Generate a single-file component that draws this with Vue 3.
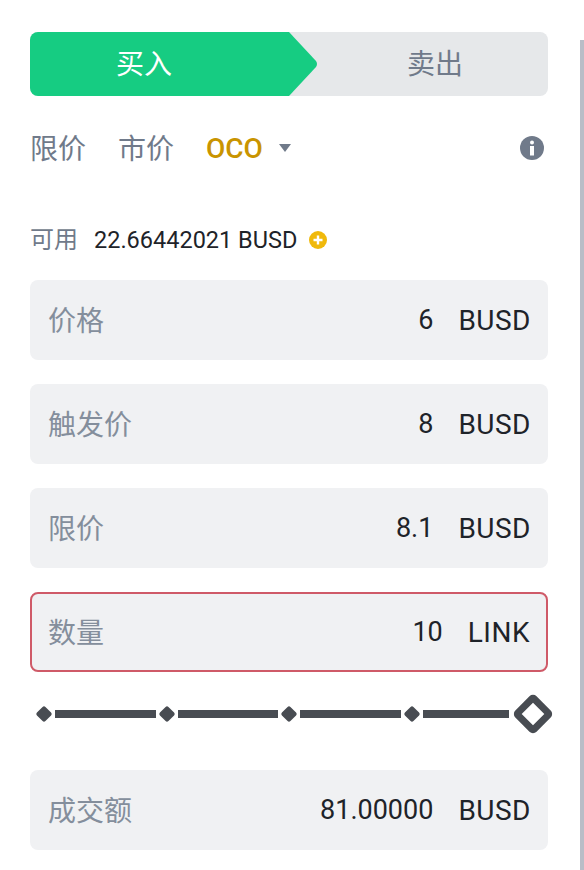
<template>
  <div class="page">
    <div class="panel">
      <div class="side-tabs">
        <div class="buy">买入</div>
        <svg class="buy-arrow" width="30" height="64" viewBox="0 0 30 64">
          <path d="M0 0H1L28 29Q30 32 28 35L1 64H0Z" fill="#16cc82" />
        </svg>
        <div class="sell">卖出</div>
      </div>

      <div class="order-types">
        <span class="type">限价</span>
        <span class="type">市价</span>
        <span class="type active">OCO</span>
        <span class="caret"></span>
        <svg class="info" width="24" height="24" viewBox="0 0 24 24">
          <circle cx="12" cy="12" r="12" fill="#707a8a" />
          <circle cx="12" cy="6.5" r="2" fill="#fff" />
          <rect x="10" y="10" width="4" height="9.5" fill="#fff" />
        </svg>
      </div>

      <div class="balance">
        <span class="balance-label">可用</span>
        <span class="balance-value">22.66442021 BUSD</span>
        <svg width="18" height="18" viewBox="0 0 18 18">
          <circle cx="9" cy="9" r="9" fill="#f0b90b" />
          <path d="M9 4.5v9M4.5 9h9" stroke="#fff" stroke-width="2.4" />
        </svg>
      </div>

      <div class="fields">
        <div v-for="f in topFields" :key="f.label" class="field" :class="{ error: f.error }">
          <span class="field-label">{{ f.label }}</span>
          <span class="field-value">{{ f.value }}</span>
          <span class="field-unit">{{ f.unit }}</span>
        </div>
      </div>

      <div class="slider">
        <template v-for="n in 4" :key="n">
          <span class="dot"></span>
          <span class="seg"></span>
        </template>
        <span class="thumb"></span>
      </div>

      <div class="field">
        <span class="field-label">成交额</span>
        <span class="field-value">81.00000</span>
        <span class="field-unit">BUSD</span>
      </div>
    </div>
    <div class="scrollbar"></div>
  </div>
</template>

<script setup>
const topFields = [
  { label: '价格', value: '6', unit: 'BUSD' },
  { label: '触发价', value: '8', unit: 'BUSD' },
  { label: '限价', value: '8.1', unit: 'BUSD' },
  { label: '数量', value: '10', unit: 'LINK', error: true }
]
</script>

<style>
html, body {
  margin: 0;
  background: #fff;
}
</style>

<style scoped>
.page {
  display: flex;
  height: 870px;
  overflow: hidden;
  font-family: Roboto, "Noto Sans CJK SC", sans-serif;
  color: #1e2329;
}

.panel {
  width: 518px;
  padding: 32px 0 0 30px;
}

.scrollbar {
  width: 4px;
  height: 830px;
  margin: 40px 0 0 32px;
  background: #b9bdc7;
}

.side-tabs {
  display: flex;
  height: 64px;
  background: #e6e8ea;
  border-radius: 8px;
  overflow: hidden;
  font-size: 28px;
  line-height: 66px;
}

.buy {
  width: 258px;
  padding-right: 30px;
  box-sizing: border-box;
  text-align: center;
  color: #fff;
  background: #16cc82;
}

.buy-arrow {
  flex: none;
}

.sell {
  flex: 1;
  padding-left: 4px;
  text-align: center;
  color: #707a8a;
}

.order-types {
  display: flex;
  align-items: center;
  height: 40px;
  margin-top: 32px;
  font-size: 28px;
  color: #707a8a;
}

.type {
  margin-right: 32px;
  margin-bottom: 2px;
}

.type.active {
  margin-right: 16px;
  margin-bottom: 0;
  font-weight: 500;
  color: #c99400;
}

.caret {
  width: 0;
  height: 0;
  border-left: 6px solid transparent;
  border-right: 6px solid transparent;
  border-top: 8px solid #707a8a;
}

.info {
  margin-left: auto;
  margin-right: 4px;
}

.balance {
  display: flex;
  align-items: center;
  height: 32px;
  margin-top: 56px;
  font-size: 23.5px;
}

.balance-label {
  margin-right: 16px;
  margin-bottom: 5px;
  font-size: 24px;
  color: #707a8a;
}

.balance-value {
  margin-right: 12px;
}

.fields {
  display: flex;
  flex-direction: column;
  gap: 24px;
  margin-top: 24px;
}

.field {
  display: flex;
  align-items: center;
  height: 80px;
  padding: 0 17px 0 18px;
  box-sizing: border-box;
  background: #f0f1f3;
  border-radius: 8px;
  font-size: 27px;
}

.field.error {
  border: 2px solid #cf5a68;
  padding: 0 16px;
}

.field-label {
  margin-right: auto;
  margin-bottom: 2px;
  font-size: 28px;
  color: #848e9c;
}

.field-unit {
  margin-left: 25px;
  font-size: 28px;
  letter-spacing: 0.5px;
}

.slider {
  display: flex;
  align-items: center;
  gap: 5px;
  height: 44px;
  margin: 20px 0 34px 8px;
}

.dot {
  flex: none;
  width: 12px;
  height: 12px;
  background: #484c52;
  border-radius: 2px;
  transform: rotate(45deg);
}

.seg {
  flex: none;
  width: 100.6px;
  height: 8px;
  background: #484c52;
}

.seg:nth-last-child(2) {
  flex: 1;
  width: auto;
  margin-right: 4px;
}

.thumb {
  flex: none;
  width: 30px;
  height: 30px;
  box-sizing: border-box;
  background: #fff;
  border: 7px solid #484c52;
  border-radius: 5px;
  transform: rotate(45deg);
}
</style>
